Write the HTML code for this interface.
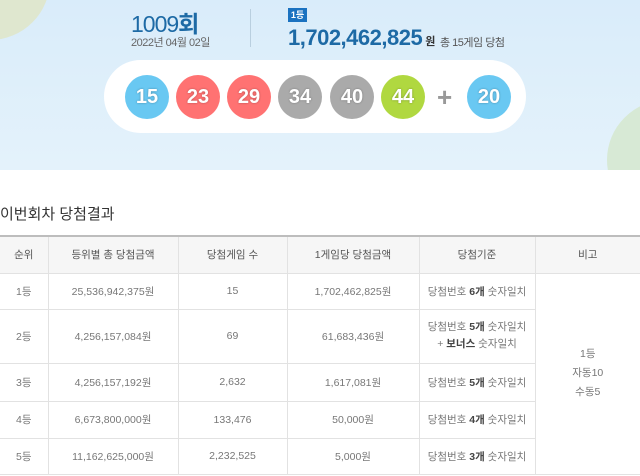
<!DOCTYPE html>
<html><head><meta charset="utf-8"><style>
*{margin:0;padding:0;box-sizing:border-box}
body{width:640px;height:476px;overflow:hidden;background:#fff;font-family:"Liberation Sans","Noto Sans CJK KR",sans-serif;position:relative}
.ban{position:absolute;left:0;top:0;width:640px;height:170px;background:linear-gradient(#d9ecfa,#e4f2fb);overflow:hidden}
.c1{position:absolute;left:-70px;top:-80px;width:120px;height:120px;border-radius:50%;background:#dfe7cf}
.c2{position:absolute;left:607px;top:100px;width:120px;height:120px;border-radius:50%;background:#d7e9d5}
.t{position:absolute;white-space:nowrap}
.pill{position:absolute;left:104px;top:60px;width:422px;height:73px;border-radius:37px;background:#fff}
.b{position:absolute;top:75px;width:44px;height:44px;border-radius:50%;color:#fff;font-weight:bold;font-size:20px;line-height:44px;text-align:center;text-shadow:0 0 2px rgba(0,0,0,.3)}
table{position:absolute;left:0;top:235px;width:640px;border-collapse:collapse;border-top:2px solid #bdbdbd;font-size:10.5px;color:#777;text-align:center}
td,th{border:1px solid #e2e2e2;font-weight:normal}
tr>*:first-child{border-left:none}tr>*:last-child{border-right:none}
th{background:#f6f6f6;height:37px;color:#555}
b{color:#444}
</style></head><body>
<div class="ban"><div class="c1"></div><div class="c2"></div>
<div class="t" style="left:131px;top:5px;font-size:23px;color:#1d6aa5;letter-spacing:-1px">1009<span style="font-weight:bold">회</span></div>
<div class="t" style="left:131px;top:34px;font-size:11px;color:#666;letter-spacing:-0.5px">2022년 04월 02일</div>
<div style="position:absolute;left:250px;top:9px;width:1px;height:38px;background:#b9cfdf"></div>
<div class="t" style="left:288px;top:8px;width:19px;height:14px;background:#1b72c0;color:#fff;font-size:9px;font-weight:bold;text-align:center;line-height:14px">1등</div>
<div class="t" style="left:288px;top:25px;font-size:22px;color:#1d6aa5;font-weight:bold;letter-spacing:-0.5px">1,702,462,825<span style="font-size:11px;color:#333;margin-left:3px">원</span></div>
<div class="t" style="left:440px;top:34px;font-size:11px;color:#555;letter-spacing:-0.5px">총 15게임 당첨</div>
<div class="pill"></div>
<div class="b" style="left:125px;background:#69c8f2">15</div>
<div class="b" style="left:176px;background:#ff7272">23</div>
<div class="b" style="left:227px;background:#ff7272">29</div>
<div class="b" style="left:278px;background:#aaa">34</div>
<div class="b" style="left:330px;background:#aaa">40</div>
<div class="b" style="left:381px;background:#b0d840">44</div>
<div class="t" style="left:437px;top:82px;font-size:26px;color:#999;font-weight:bold;line-height:30px">+</div>
<div class="b" style="left:467px;background:#69c8f2">20</div>
</div>
<div class="t" style="left:0;top:203px;font-size:15px;color:#333">이번회차 당첨결과</div>
<table>
<colgroup><col style="width:48px"><col style="width:130px"><col style="width:109px"><col style="width:132px"><col style="width:116px"><col></colgroup>
<tr><th>순위</th><th>등위별 총 당첨금액</th><th>당첨게임 수</th><th>1게임당 당첨금액</th><th>당첨기준</th><th>비고</th></tr>
<tr style="height:36px"><td>1등</td><td>25,536,942,375원</td><td>15</td><td>1,702,462,825원</td><td>당첨번호 <b>6개</b> 숫자일치</td><td rowspan="5" style="line-height:19px">1등<br>자동10<br>수동5</td></tr>
<tr style="height:54px"><td>2등</td><td>4,256,157,084원</td><td>69</td><td>61,683,436원</td><td style="line-height:17px">당첨번호 <b>5개</b> 숫자일치<br>+ <b>보너스</b> 숫자일치</td></tr>
<tr style="height:38px"><td>3등</td><td>4,256,157,192원</td><td>2,632</td><td>1,617,081원</td><td>당첨번호 <b>5개</b> 숫자일치</td></tr>
<tr style="height:37px"><td>4등</td><td>6,673,800,000원</td><td>133,476</td><td>50,000원</td><td>당첨번호 <b>4개</b> 숫자일치</td></tr>
<tr style="height:36px"><td>5등</td><td>11,162,625,000원</td><td>2,232,525</td><td>5,000원</td><td>당첨번호 <b>3개</b> 숫자일치</td></tr>
</table>
</body></html>
